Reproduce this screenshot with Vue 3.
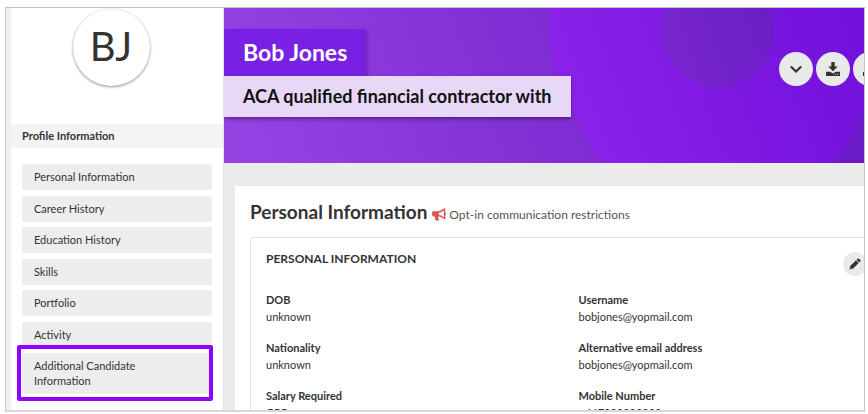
<script setup>
const sections = [
  'Personal Information',
  'Career History',
  'Education History',
  'Skills',
  'Portfolio',
  'Activity',
  'Additional Candidate Information',
]

const details = [
  { label: 'DOB', value: 'unknown' },
  { label: 'Username', value: 'bobjones@yopmail.com' },
  { label: 'Nationality', value: 'unknown' },
  { label: 'Alternative email address', value: 'bobjones@yopmail.com' },
  { label: 'Salary Required', value: 'GBP' },
  { label: 'Mobile Number', value: '+447999999999' },
]
</script>

<template>
  <div class="window">
    <aside class="sidebar">
      <div class="avatar-area">
        <div class="avatar">BJ</div>
      </div>
      <h2 class="sidebar-heading">Profile Information</h2>
      <nav class="menu">
        <a
          v-for="(section, i) in sections"
          :key="section"
          href="#"
          class="menu-item"
          :class="{ highlighted: i === sections.length - 1 }"
        ><span class="menu-text">{{ section }}</span></a>
      </nav>
    </aside>

    <main class="content">
      <header class="hero">
        <svg class="hero-art" viewBox="0 0 641 155" preserveAspectRatio="xMinYMin slice" aria-hidden="true">
          <defs>
            <linearGradient id="base" gradientUnits="userSpaceOnUse" x1="0" y1="155" x2="370" y2="20">
              <stop offset="0" stop-color="#9544e4" />
              <stop offset="1" stop-color="#7b2ad0" />
            </linearGradient>
            <linearGradient id="blob" gradientUnits="userSpaceOnUse" x1="330" y1="120" x2="641" y2="0">
              <stop offset="0" stop-color="#8d23ea" />
              <stop offset="1" stop-color="#7010da" />
            </linearGradient>
            <linearGradient id="disc" gradientUnits="userSpaceOnUse" x1="437" y1="60" x2="550" y2="20">
              <stop offset="0" stop-color="#7927d0" />
              <stop offset="1" stop-color="#6c1ec6" />
            </linearGradient>
          </defs>
          <rect width="700" height="155" fill="url(#base)" />
          <path d="M560 155H700V0H641V102Z" fill="#6b1bc8" />
          <path d="M326 0C324 23 325 49 333 69C338 84 344 97 352 109L375 155H612L641 102V0Z" fill="url(#blob)" />
          <circle cx="494" cy="23" r="56" fill="url(#disc)" />
        </svg>
        <div class="identity">
          <h1 class="name">Bob Jones</h1>
          <p class="headline">ACA qualified financial contractor with</p>
        </div>
        <div class="actions">
          <button class="round" type="button" aria-label="More">
            <svg viewBox="0 0 16 16" width="16" height="16"><path d="M2.800 5.500L8 10.500L13.200 5.500" fill="none" stroke="#333" stroke-width="2.200" /></svg>
          </button>
          <button class="round" type="button" aria-label="Download">
            <svg viewBox="0 0 16 16" width="16" height="16" fill="#333">
              <path d="M6.300 1H9.700V5.500H12.700L8 10.300L3.300 5.500H6.300Z" />
              <path d="M1 10.800H5.200L8 12.500L10.800 10.800H15V15H1ZM9.800 12.800V13.800H10.800V12.800ZM12.200 12.800V13.800H13.200V12.800Z" fill-rule="evenodd" />
            </svg>
          </button>
          <button class="round" type="button" aria-label="Upload">
            <svg viewBox="0 0 16 16" width="16" height="16" fill="#333">
              <path d="M6.300 10.500H9.700V6H12.700L8 1L3.300 6H6.300Z" />
              <path d="M1 11H5.200V12.500H10.800V11H15V15H1Z" />
            </svg>
          </button>
        </div>
      </header>

      <section class="card">
        <div class="card-title">
          <h2>Personal Information</h2>
          <svg class="horn" viewBox="0 0 14 13" width="14" height="13" aria-hidden="true">
            <path d="M1.500 3.300H6C8.500 3 10.500 1.800 12.300 0.300C13 0 13.300 0.300 13.300 1V4.600C14.200 5 14.200 6.800 13.300 7.200V10.700C13.300 11.400 13 11.600 12.300 11.200C10.500 9.700 8.700 8.700 6.300 8.400C5.800 9.300 6.200 10 6.800 10.600C6.300 11 6.500 11.600 7.200 12C6.200 12.900 4.200 12.800 3.500 12C3.100 10.800 2.500 9.700 2.900 8.400H1.500C0.600 8.400 0.100 7.900 0.100 7V4.700C0.100 3.800 0.600 3.300 1.500 3.300ZM7 4.600V7.100C8.800 7.400 10.400 8.100 12 9.300V2.400C10.400 3.600 8.800 4.300 7 4.600Z" fill="#dc5650" fill-rule="evenodd" />
          </svg>
          <span class="opt-in">Opt-in communication restrictions</span>
        </div>
        <div class="panel">
          <div class="panel-head">
            <h3>PERSONAL INFORMATION</h3>
            <button class="edit" type="button" aria-label="Edit">
              <svg viewBox="0 0 12 12" width="12" height="12" fill="#333">
                <path d="M0.500 11.500L1.200 8.100L7 2.300L9.700 5L3.900 10.800ZM1.800 9.100L1.600 10.400L2.900 10.200Z" fill-rule="evenodd" />
                <path d="M7.600 1.700L8.600 0.700Q9.300 0.200 10 0.700L11.300 2Q11.800 2.700 11.300 3.400L10.300 4.400Z" />
              </svg>
            </button>
          </div>
          <dl class="details">
            <div v-for="item in details" :key="item.label" class="detail">
              <dt>{{ item.label }}</dt>
              <dd>{{ item.value }}</dd>
            </div>
          </dl>
        </div>
      </section>
    </main>
  </div>
</template>

<style>
body {
  background: #fff;
}
</style>

<style scoped>
* {
  box-sizing: border-box;
}

.window {
  display: flex;
  height: calc(100vh - 9px);
  margin: 7px 3px 0 5px;
  overflow: hidden;
  border: 1px solid #c4c4c4;
  border-bottom: 2px solid #d8d8d8;
  background: #ebebeb;
  color: #333;
  font-family: Lato, "Liberation Sans", sans-serif;
  font-size: 11px;
}

h1, h2, h3, p, dl, dd {
  margin: 0;
}

.sidebar {
  flex: 0 0 218px;
  border-left: 5px solid #efefef;
  border-right: 1px solid #e4e4e4;
  background: #fff;
}

.avatar-area {
  display: flex;
  justify-content: center;
  padding: 1px 12px 38px 0;
}

.avatar {
  display: flex;
  align-items: center;
  justify-content: center;
  width: 77px;
  height: 77px;
  border-radius: 50%;
  box-shadow: 0 1px 3px rgba(0, 0, 0, 0.45);
  font-size: 40px;
  line-height: 74px;
  align-items: flex-start;
}

.sidebar-heading {
  padding: 0 11px;
  background: #f4f4f4;
  font-size: 11px;
  font-weight: 700;
  line-height: 24px;
}

.menu {
  display: flex;
  flex-direction: column;
  justify-content: space-between;
  min-height: 230px;
  margin: 16px 11px 0;
}

.menu-item {
  position: relative;
  padding: 5px 12px 6px;
  border-radius: 2px;
  background: #ededed;
  color: #333;
  line-height: 15px;
  text-decoration: none;
}

.menu-text {
  display: block;
  max-width: 130px;
}

.highlighted::after {
  content: "";
  position: absolute;
  inset: -8px -1px -7px -5px;
  border: 4px solid #9000ff;
  border-radius: 2px;
}

.content {
  display: flex;
  flex: 1;
  flex-direction: column;
  min-width: 0;
  margin-right: -24px;
}

.hero {
  position: relative;
  display: flex;
  flex: none;
  justify-content: space-between;
  min-height: 155px;
  padding-top: 21px;
  overflow: hidden;
}

.hero-art {
  position: absolute;
  inset: 0;
  width: calc(100% - 24px);
  height: 100%;
}

.identity {
  position: relative;
  display: flex;
  flex-direction: column;
  align-items: flex-start;
}

.name {
  padding: 0 19px;
  background: #7820e4;
  box-shadow: 1px 2px 4px rgba(0, 0, 0, 0.3);
  color: #fff;
  font-size: 23px;
  line-height: 47px;
}

.headline {
  position: relative;
  padding: 0 19px;
  background: #e7d8f8;
  box-shadow: 0 2px 4px rgba(0, 0, 0, 0.4);
  color: #111;
  font-size: 18px;
  font-weight: 700;
  line-height: 41px;
}

.actions {
  position: relative;
  display: flex;
  gap: 3px;
  padding: 23px 1px 0 0;
}

.round,
.edit {
  display: flex;
  align-items: center;
  justify-content: center;
  width: 34px;
  height: 34px;
  padding: 0;
  border: 0;
  border-radius: 50%;
  background: #e9e9e9;
}

.card {
  flex: 1 0 auto;
  margin: 23px 0 0 11px;
  padding: 14px 0 0 15px;
  background: #fff;
}

.card-title {
  display: flex;
  align-items: baseline;
  height: 37px;
}

.card-title h2 {
  font-size: 19px;
  line-height: 23px;
}

.horn {
  align-self: flex-start;
  margin: 8px 3px 0 5px;
}

.opt-in {
  color: #555;
  font-size: 12px;
}

.panel {
  padding: 14px 20px 20px 15px;
  border: 1px solid #e0e0e0;
  border-radius: 3px 0 0;
}

.panel-head {
  display: flex;
  justify-content: space-between;
}

.panel-head h3 {
  font-size: 12px;
  line-height: 14px;
}

.edit {
  width: 24px;
  height: 24px;
}

.details {
  display: grid;
  grid-template-columns: 1fr 1fr;
  gap: 14px 24px;
  padding-top: 15px;
}

.detail {
  line-height: 17px;
}

dt {
  font-weight: 700;
}
</style>
